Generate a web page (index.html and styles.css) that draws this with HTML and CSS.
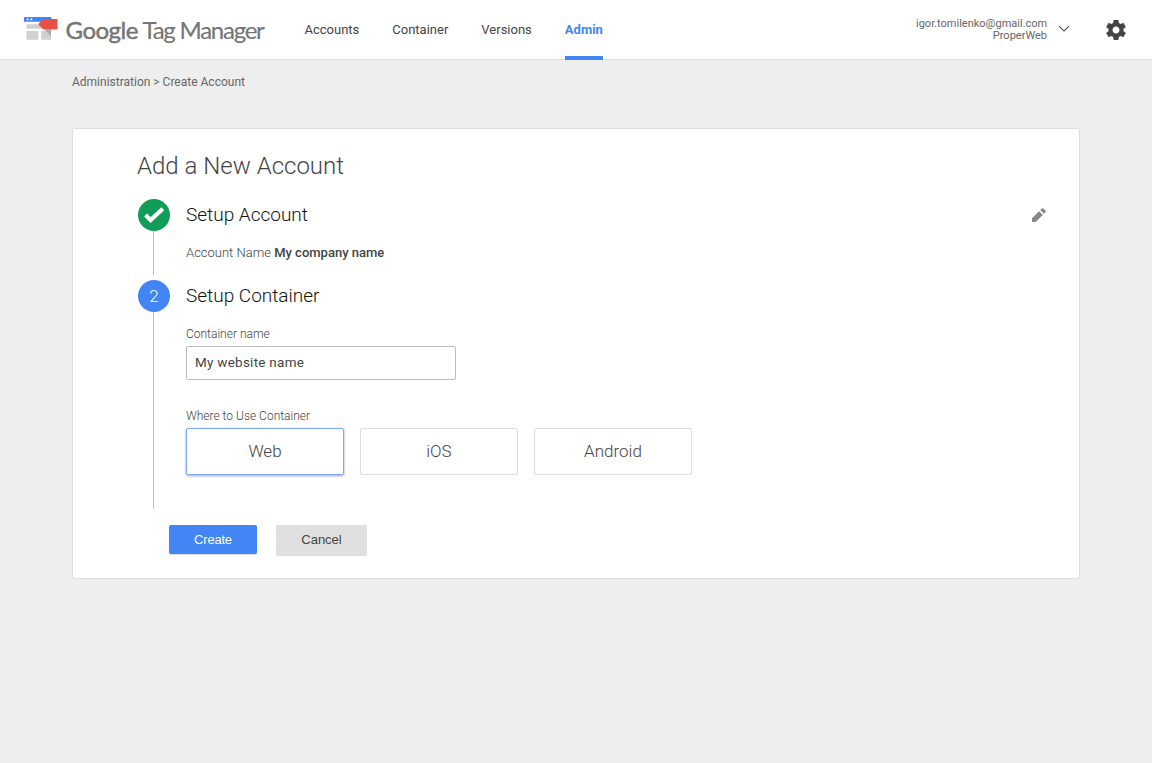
FILE: index.html
```html
<!DOCTYPE html>
<html lang="en">
<head>
<meta charset="utf-8">
<title>Google Tag Manager</title>
<link rel="stylesheet" href="styles.css">
</head>
<body>
<header class="topbar">
  <div class="brand">
    <svg class="brand-icon" width="36" height="26" viewBox="0 0 36 26">
      <path fill="#d0d0d0" d="M3.500 7.300h20v4.400h-20zM3.500 14h11.800v8.700H3.500zM18.200 14H28v8.700h-9.800z"/>
      <path fill="#4385f5" d="M1 1a1 1 0 0 1 1-1h25.500a1 1 0 0 1 1 1v3.700H1z"/>
      <path fill="#fff" d="M3.700 1.400h1.800v1.800H3.700zM7.400 1.400h1.800v1.800H7.400z"/>
      <path fill="#aaa" d="M21.500 12.500H28v7z"/>
      <path fill="#e75045" d="M20.500 2h14v10.500h-14l-4.700-4.600V6.500z"/>
    </svg>
    <span class="brand-google">Google</span><span class="brand-product">Tag Manager</span>
  </div>
  <nav class="tabs">
    <a class="tab">Accounts</a>
    <a class="tab">Container</a>
    <a class="tab">Versions</a>
    <a class="tab tab-active">Admin</a>
  </nav>
  <div class="user"><div class="email">igor.tomilenko@gmail.com</div><div class="org">ProperWeb</div></div>
  <svg class="chevron" width="12" height="8" viewBox="0 0 12 8"><path d="M1 1.200l5 4.800 5-4.800" fill="none" stroke="#555" stroke-width="1.100"/></svg>
  <svg class="gear" width="24" height="24" viewBox="0 0 24 24"><path fill="#444" d="M19.430 12.980c.04-.32.07-.64.07-.98s-.03-.66-.07-.98l2.110-1.650c.19-.15.24-.42.12-.64l-2-3.460c-.12-.22-.39-.3-.61-.22l-2.490 1c-.52-.4-1.080-.73-1.690-.98l-.38-2.650C14.460 2.180 14.250 2 14 2h-4c-.25 0-.46.18-.49.42l-.38 2.650c-.61.25-1.170.59-1.690.98l-2.490-1c-.23-.09-.49 0-.61.22l-2 3.460c-.13.22-.07.49.12.64l2.110 1.650c-.04.32-.07.65-.07.98s.03.66.07.98l-2.110 1.650c-.19.15-.24.42-.12.64l2 3.460c.12.22.39.3.61.22l2.490-1c.52.4 1.080.73 1.690.98l.38 2.650c.03.24.24.42.49.42h4c.25 0 .46-.18.49-.42l.38-2.650c.61-.25 1.170-.59 1.690-.98l2.490 1c.23.09.49 0 .61-.22l2-3.460c.12-.22.07-.49-.12-.64l-2.110-1.650zM12 15.500c-1.930 0-3.500-1.570-3.500-3.500s1.570-3.500 3.500-3.500 3.500 1.570 3.500 3.500-1.570 3.500-3.500 3.500z"/></svg>
</header>
<div class="breadcrumb"><span>Administration &gt; Create Account</span></div>
<main class="card">
  <h1 class="title"><span>Add a New Account</span></h1>
  <section class="step step-account">
    <div class="rail">
      <div class="badge badge-done"><svg width="32" height="32" viewBox="0 0 32 32"><path d="M7.600 16l5 5L24.800 9.700" fill="none" stroke="#fff" stroke-width="4.200"/></svg></div>
      <div class="line"></div>
    </div>
    <div class="step-body">
      <div class="step-head"><h2 class="step-title">Setup Account</h2>
        <svg class="pencil" width="18" height="18" viewBox="0 0 18 18"><path fill="#888" d="M2 12.300V16h3.700l7.100-7.100-3.700-3.700zM10.200 4.100l3.700 3.700 1.700-1.700a1 1 0 0 0 0-1.300L13.200 2.400a1 1 0 0 0-1.300 0z"/></svg>
      </div>
      <div class="summary"><span class="summary-label">Account Name</span> <b class="summary-value">My company name</b></div>
    </div>
  </section>
  <section class="step step-container">
    <div class="rail">
      <div class="badge badge-current">2</div>
      <div class="line"></div>
    </div>
    <div class="step-body">
      <div class="step-head"><h2 class="step-title">Setup Container</h2></div>
      <div class="label label-name"><span>Container name</span></div>
      <div class="field"><span>My website name</span></div>
      <div class="label label-where"><span>Where to Use Container</span></div>
      <div class="choices">
        <div class="choice choice-selected">Web</div>
        <div class="choice">iOS</div>
        <div class="choice">Android</div>
      </div>
    </div>
  </section>
  <div class="actions"><div class="btn btn-create">Create</div><div class="btn btn-cancel">Cancel</div></div>
</main>
</body>
</html>
```
FILE: styles.css
```css
* { box-sizing: border-box; }
body { margin: 0; min-height: 763px; background: #eee; font-family: Roboto, "Liberation Sans", sans-serif; color: #444; }
h1, h2 { margin: 0; font-weight: 300; }
svg { display: block; flex: none; }
.topbar { display: flex; height: 60px; background: #fff; border-bottom: 1px solid #dcdcdc; white-space: nowrap; }
.brand { display: flex; width: 304.500px; padding: 15px 0 0 23px; color: #757575; font-family: Lato, sans-serif; font-size: 24px; line-height: 30px; }
.brand-icon { margin-top: 2px; }
.brand-google { width: 83.500px; padding-left: 6.500px; -webkit-text-stroke: .5px #757575; letter-spacing: -.5px; }
.brand-product { letter-spacing: -1.250px; -webkit-text-stroke: .15px #757575; }
.tabs { display: flex; width: 611.500px; font-size: 13px; line-height: 60px; }
.tab { height: 60px; color: #444; margin-right: 33px; }
.tab-active { color: #4285f4; font-weight: 700; border-bottom: 4px solid #4285f4; margin-right: 0; }
.user { width: 131px; padding-top: 18px; font-size: 11px; line-height: 12px; text-align: right; color: #666; }
.chevron { margin: 25px 0 0 11px; }
.gear { margin: 18px 0 0 34px; }
.breadcrumb { padding: 14px 72px 0; height: 68px; font-size: 12px; line-height: 16px; color: #666; }
.card { width: 1008px; height: 451px; margin-left: 72px; padding: 20px 30px 0 64px; background: #fff; border: 1px solid #dedede; border-radius: 2px; }
.title { height: 50px; font-size: 24px; line-height: 34px; color: #444; }
.step { display: flex; }
.step-account { height: 81px; }
.step-container { height: 229px; }
.rail { width: 34px; display: flex; flex-direction: column; padding-left: 1px; }
.badge { width: 32px; height: 32px; border-radius: 50%; color: #fff; font-size: 17px; font-weight: 300; line-height: 33px; text-align: center; flex: none; }
.badge-done { background: #0f9d58; }
.badge-current { background: #4285f4; }
.line { width: 1px; flex: 1; margin-left: 15px; background: #bfbfbf; }
.step-account .line { margin-bottom: 5px; }
.step-body { flex: 1; padding-left: 15px; }
.step-head { display: flex; justify-content: space-between; height: 32px; }
.step-title { font-size: 19px; line-height: 32px; color: #111; }
.pencil { margin: 7px 1px 0 0; }
.summary { margin-top: 13px; font-size: 13px; line-height: 18px; }
.summary-label { font-weight: 300; }
.summary-value { font-weight: 500; }
.label { font-size: 12px; font-weight: 300; line-height: 16px; color: #444; }
.label-name { margin-top: 14px; }
.field { width: 270px; height: 34px; margin-top: 4px; padding-left: 8px; border: 1px solid #bdbdbd; border-radius: 2px; font-size: 13.500px; letter-spacing: .25px; line-height: 31px; }
.label-where { margin-top: 28px; }
.choices { display: flex; gap: 16px; margin-top: 4px; }
.choice { width: 158px; height: 47px; border: 1px solid #dedede; border-radius: 2px; font-size: 17px; font-weight: 300; line-height: 45px; text-align: center; }
.choice-selected { border-color: #7baaf7; box-shadow: 0 1px 3px rgba(0,0,0,.35); }
.actions { display: flex; gap: 19px; padding: 16px 0 0 32px; }
.btn { width: 88px; height: 29px; border-radius: 2px; font: 13px/29px "Liberation Sans", sans-serif; text-align: center; box-shadow: 0 1px 1px rgba(0,0,0,.15); }
.btn-create { background: #4285f4; color: #fff; letter-spacing: -.2px; }
.btn-cancel { width: 91px; height: 30px; background: #e0e0e0; color: #444; }
```
